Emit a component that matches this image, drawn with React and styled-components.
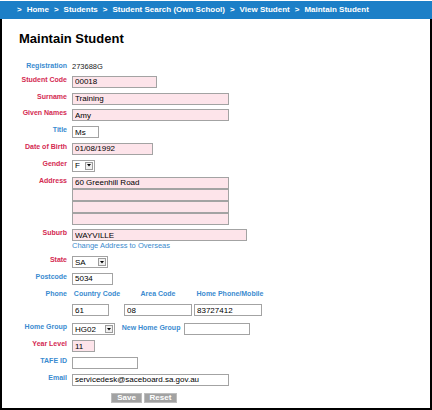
import React from "react";
import styled, { createGlobalStyle } from "styled-components";

const GlobalStyle = createGlobalStyle`
  html, body { margin: 0; padding: 0; background: #fff; }
  body { font-family: "Liberation Sans", Arial, sans-serif; }
  * { box-sizing: border-box; }
`;

const BLUE = "#3a8bd0";
const RED = "#d42a52";
const PINK = "#fde4ea";

const Page = styled.div`
  width: 432px;
  height: 410px;
  display: flex;
  flex-direction: column;
  padding-top: 1px;
  background: #fff;
`;

const TopBar = styled.nav`
  height: 18px;
  flex: none;
  background: #1c7fc7;
  display: flex;
  align-items: center;
  gap: 5px;
  padding-left: 17px;
  color: #fff;
  font-weight: bold;
  font-size: 8px;
  line-height: 8px;
`;

const Crumb = styled.span`
  white-space: nowrap;
`;

const Body = styled.main`
  flex: 1;
  border-left: 2px solid #000;
  border-right: 2px solid #000;
  border-bottom: 2px solid #000;
`;

const Title = styled.h1`
  margin: 12px 0 16px 17px;
  font-size: 13px;
  line-height: 15px;
  font-weight: bold;
  color: #000;
`;

const Form = styled.div`
  display: grid;
  grid-template-columns: 65px 1fr;
  column-gap: 5px;
  row-gap: 4.8px;
  align-items: start;
`;

const Label = styled.div`
  text-align: right;
  font-weight: bold;
  font-size: 7px;
  line-height: 8px;
  color: ${(p) => (p.$req ? RED : BLUE)};
  white-space: nowrap;
`;

const Value = styled.div`
  font-size: 7.5px;
  line-height: 9px;
  color: #222;
`;

const Input = styled.input`
  display: block;
  width: ${(p) => p.$w}px;
  height: 12px;
  margin: 0;
  margin-left: ${(p) => p.$ml || 0}px;
  padding: 0 2px;
  border: 1px solid #a3a3a3;
  background: ${(p) => (p.$pink ? PINK : "#fff")};
  font-family: "Liberation Sans", Arial, sans-serif;
  font-size: 8px;
  color: #000;
  outline: none;
`;

const Stack = styled.div`
  display: flex;
  flex-direction: column;
`;

const Link = styled.a`
  display: block;
  color: #3a8bcd;
  font-size: 7.5px;
  line-height: 10px;
  text-decoration: none;
`;

const SelectBox = styled.div`
  width: ${(p) => p.$w}px;
  height: 12px;
  flex: none;
  border: 1px solid #a3a3a3;
  background: #fff;
  display: flex;
  align-items: center;
  justify-content: space-between;
  padding-left: 2px;
  font-size: 8px;
  color: #000;
`;

const Arrow = styled.span`
  width: 8px;
  height: 8px;
  margin-right: 1px;
  border: 1px solid #9c9c9c;
  background: #f0f0f0;
  display: flex;
  align-items: center;
  justify-content: center;
`;

const Select = ({ w, value }) => (
  <SelectBox $w={w}>
    <span>{value}</span>
    <Arrow>
      <svg width="4" height="3" viewBox="0 0 4 3">
        <path d="M0 0 L4 0 L2 2.5 Z" fill="#000" />
      </svg>
    </Arrow>
  </SelectBox>
);

const PhoneGrid = styled.div`
  display: grid;
  grid-template-columns: 50px 72px 72px;
  row-gap: 6.5px;
  padding-bottom: 2.2px;
`;

const SubLabel = styled.div`
  justify-self: center;
  font-weight: bold;
  font-size: 7px;
  line-height: 8px;
  color: ${BLUE};
  white-space: nowrap;
`;

const Inline = styled.div`
  display: flex;
  align-items: flex-start;
`;

const InlineLabel = styled(Label)`
  margin-left: 6.7px;
  margin-right: 3.3px;
  padding-top: 0.5px;
`;

const Buttons = styled.div`
  grid-column: 2;
  display: flex;
  gap: 2px;
  padding-left: 39px;
  margin-top: 2.5px;
`;

const Button = styled.button`
  width: ${(p) => p.$w}px;
  height: 10px;
  padding: 0;
  border: 1px solid #bdbdbd;
  background: #a2a2a2;
  color: #fff;
  font-family: "Liberation Sans", Arial, sans-serif;
  font-weight: bold;
  font-size: 8px;
  line-height: 8px;
`;

const crumbs = ["Home", "Students", "Student Search (Own School)", "View Student", "Maintain Student"];

export default function App() {
  return (
    <>
      <GlobalStyle />
      <Page>
        <TopBar>
          {crumbs.map((c) => (
            <React.Fragment key={c}>
              <Crumb>&gt;</Crumb>
              <Crumb>{c}</Crumb>
            </React.Fragment>
          ))}
        </TopBar>
        <Body>
          <Title>Maintain Student</Title>
          <Form>
            <Label>Registration</Label>
            <Value>273688G</Value>

            <Label $req>Student Code</Label>
            <Input $w={85} $pink defaultValue="00018" />

            <Label $req>Surname</Label>
            <Input $w={157} $pink defaultValue="Training" />

            <Label $req>Given Names</Label>
            <Input $w={157} $pink defaultValue="Amy" />

            <Label>Title</Label>
            <Input $w={27} defaultValue="Ms" />

            <Label $req>Date of Birth</Label>
            <Input $w={81} $pink defaultValue="01/08/1992" />

            <Label $req>Gender</Label>
            <Select w={23} value="F" />

            <Label $req>Address</Label>
            <Stack>
              <Input $w={157} $pink defaultValue="60 Greenhill Road" />
              <Input $w={157} $pink defaultValue="" />
              <Input $w={157} $pink defaultValue="" />
              <Input $w={157} $pink defaultValue="" />
            </Stack>

            <Label $req>Suburb</Label>
            <Stack>
              <Input $w={175} $pink defaultValue="WAYVILLE" />
              <Link href="#">Change Address to Overseas</Link>
            </Stack>

            <Label $req>State</Label>
            <Select w={36} value="SA" />

            <Label>Postcode</Label>
            <Input $w={41} defaultValue="5034" />

            <Label>Phone</Label>
            <PhoneGrid>
              <SubLabel>Country Code</SubLabel>
              <SubLabel>Area Code</SubLabel>
              <SubLabel>Home Phone/Mobile</SubLabel>
              <Input $w={37} defaultValue="61" />
              <Input $w={68} $ml={2} defaultValue="08" />
              <Input $w={68} defaultValue="83727412" />
            </PhoneGrid>

            <Label>Home Group</Label>
            <Inline>
              <Select w={43} value="HG02" />
              <InlineLabel>New Home Group</InlineLabel>
              <Input $w={66} defaultValue="" />
            </Inline>

            <Label $req>Year Level</Label>
            <Input $w={23} $pink defaultValue="11" />

            <Label>TAFE ID</Label>
            <Input $w={66} defaultValue="" />

            <Label>Email</Label>
            <Input $w={157} defaultValue="servicedesk@saceboard.sa.gov.au" />

            <Buttons>
              <Button $w={31}>Save</Button>
              <Button $w={33}>Reset</Button>
            </Buttons>
          </Form>
        </Body>
      </Page>
    </>
  );
}
